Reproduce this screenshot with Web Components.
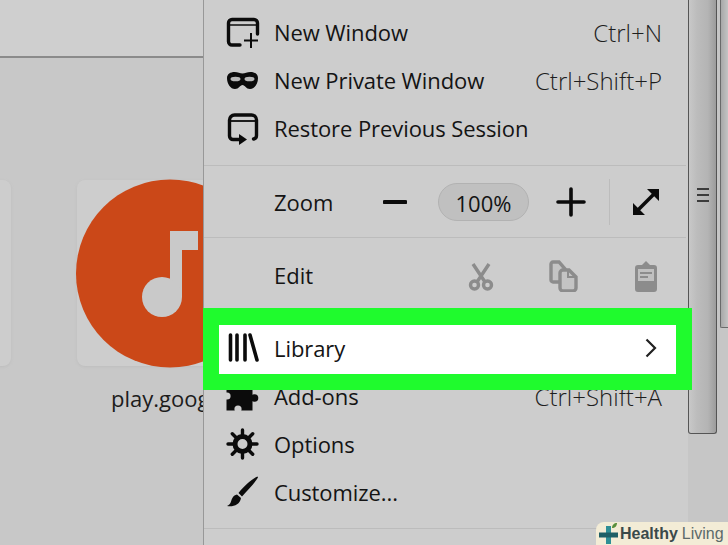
<!DOCTYPE html>
<html>
<head>
<meta charset="utf-8">
<style>
  html, body { margin: 0; height: 100%; overflow: hidden; background: #c8c8c8; }
</style>
</head>
<body>
<browser-shot>
  <new-tab slot="page"></new-tab>
  <app-menu slot="menu">
    <menu-row label="New Window" keys="Ctrl+N" icon="window"></menu-row>
    <menu-row label="New Private Window" keys="Ctrl+Shift+P" icon="mask"></menu-row>
    <menu-row label="Restore Previous Session" icon="restore"></menu-row>
    <menu-sep class="after-group"></menu-sep>
    <zoom-row></zoom-row>
    <menu-sep></menu-sep>
    <edit-row></edit-row>
    <menu-row class="picked" label="Library" icon="library" arrow></menu-row>
    <menu-row label="Add-ons" keys="Ctrl+Shift+A" icon="puzzle"></menu-row>
    <menu-row label="Options" icon="gear"></menu-row>
    <menu-row label="Customize..." icon="brush"></menu-row>
    <menu-sep class="last"></menu-sep>
  </app-menu>
  <menu-scroll slot="scroll"></menu-scroll>
  <brand-badge slot="badge"></brand-badge>
</browser-shot>

<script>
const ICONS = {
  window: `<path d="M14 29H6a3.500 3.500 0 0 1-3.500-3.500V7A3.500 3.500 0 0 1 6 3.500h22A3.500 3.500 0 0 1 31.500 7v11" fill="none" stroke="#0b0b0b" stroke-width="3.400" stroke-linecap="round"/><path d="M3 9h28" stroke="#0b0b0b" stroke-width="1.500"/><path d="M25 17v15M18 24.500h14" stroke="#0b0b0b" stroke-width="2"/>`,
  mask: `<path d="M1 14c0-4 3.500-6 7.500-6 3.500 0 5.500 1.500 8 1.500S21 8 24.500 8c4 0 7.500 2 7.500 6 0 6-3.500 11-8 11-4 0-5-4-7.500-4S13 25 9 25c-4.500 0-8-5-8-11z" fill="#0b0b0b"/><ellipse cx="9.500" cy="15" rx="5" ry="2.300" fill="#b8b8b8"/><ellipse cx="23.500" cy="15" rx="5" ry="2.300" fill="#b8b8b8"/>`,
  restore: `<path d="M3.500 8a5 5 0 0 1 5-5h17a5 5 0 0 1 5 5v15.500a3.500 3.500 0 0 1-3 3.500M3.500 8v16a3.500 3.500 0 0 0 3.500 3.500h7" fill="none" stroke="#0b0b0b" stroke-width="3.400" stroke-linecap="round"/><path d="M4 9h26" stroke="#0b0b0b" stroke-width="1.800"/><path d="M13 22l8 5.500-8 5.500z" fill="#0b0b0b"/>`,
  library: `<path d="M4.500 4v25M11 4v25M19 4v25M24 4l7 25" fill="none" stroke="#0b0b0b" stroke-width="3.600" stroke-linecap="round"/>`,
  puzzle: `<path d="M.5 6h26v24.500H.5z" fill="#0b0b0b"/><circle cx="28.500" cy="18" r="3.800" fill="#0b0b0b"/><circle cx="1" cy="16" r="3.600" fill="#cdcdcd"/><circle cx="12" cy="29" r="3.600" fill="#cdcdcd"/>`,
  gear: `<g stroke="#0b0b0b" stroke-width="3.400" stroke-linecap="round"><path d="M16.500 2v28M2 16h29M6.300 5.800l20.400 20.400M26.700 5.800L6.300 26.200"/></g><circle cx="16.500" cy="16" r="7.500" fill="#cdcdcd" stroke="#0b0b0b" stroke-width="5"/>`,
  brush: `<path d="M31.500.5C26 3 18 10 12.500 17l3.500 3.500C21 15 28 8 32 1.500z" fill="#0b0b0b"/><path d="M11 18.500c-4 1-5 4-6 7-.5 2-2 4-4 4.500 6 1 13-1 14-8z" fill="#0b0b0b"/>`
};

const svgIcon = (name) => `<svg width="34" height="34" viewBox="0 0 34 34">${ICONS[name] || ''}</svg>`;

class BrowserShot extends HTMLElement {
  constructor() {
    super();
    this.attachShadow({ mode: 'open' }).innerHTML = `
      <style>
        :host { display: grid; grid-template-columns: 203px 485px 40px; height: 545px; width: 728px; position: relative; overflow: hidden; font-family: "Open Sans", "Noto Sans", sans-serif; }
        .badge { position: absolute; right: 0; bottom: 0; z-index: 3; }
      </style>
      <slot name="page"></slot>
      <slot name="menu"></slot>
      <slot name="scroll"></slot>
      <div class="badge"><slot name="badge"></slot></div>
    `;
  }
}

class NewTab extends HTMLElement {
  constructor() {
    super();
    this.attachShadow({ mode: 'open' }).innerHTML = `
      <style>
        :host { display: flex; flex-direction: column; overflow: hidden; background: #c8c8c8; height: 545px; }
        .bar { height: 56px; flex: none; background: #cfcfcf; border-bottom: 2px solid #8b8b8b; }
        .tiles { display: flex; gap: 66px; margin: 122px 0 0 -177px; }
        .tile { flex: none; width: 188px; }
        .box { height: 186px; border-radius: 8px; background: #cdcdcd; box-shadow: 0 1px 3px #bdbdbd; position: relative; }
        .name { margin-top: 17px; margin-left: 34px; white-space: nowrap; font-size: 22px; line-height: 30px; color: #1c1c1c; }
        svg { position: absolute; left: -1px; top: -1px; }
      </style>
      <div class="bar"></div>
      <div class="tiles">
        <div class="tile"><div class="box"></div></div>
        <div class="tile">
          <div class="box">
            <svg width="190" height="190" viewBox="0 0 190 190">
              <circle cx="94" cy="94.500" r="94" fill="#cb4818"/>
              <path d="M94 52h28v19h-16v47H94z" fill="#c9c9c9"/>
              <circle cx="86" cy="118" r="20" fill="#c9c9c9"/>
            </svg>
          </div>
          <div class="name">play.goog</div>
        </div>
      </div>
    `;
  }
}

class AppMenu extends HTMLElement {
  constructor() {
    super();
    this.attachShadow({ mode: 'open' }).innerHTML = `
      <style>
        :host { display: block; height: 545px; background: #cdcdcd; border-left: 1px solid #989898; box-sizing: border-box; padding-top: 9px; position: relative; z-index: 1; }
      </style>
      <slot></slot>
    `;
  }
}

class MenuRow extends HTMLElement {
  constructor() {
    super();
    const keys = this.getAttribute('keys');
    const arrow = this.hasAttribute('arrow');
    this.attachShadow({ mode: 'open' }).innerHTML = `
      <style>
        :host { display: flex; align-items: center; box-sizing: border-box; height: 48px; padding: 0 26px 2px 22px; font-size: 22px; letter-spacing: -0.08px; color: #141414; white-space: nowrap; }
        :host(.picked) { position: relative; z-index: 2; height: 49px; margin: 11px 12px -1px 15px; padding: 0 19px 3px 7px; background: #fff; outline: 16px solid #1ffb2d; box-shadow: 0 -1px 0 16px #1ffb2d; }
        .icon { width: 34px; height: 34px; flex: none; margin: 2px 14px 0 0; display: block; }
        :host(.picked) .icon { margin-top: 0; }
        svg { display: block; }
        .label { flex: 1; }
        .keys { font-size: 24px; color: #1e1e1e; font-weight: 300; letter-spacing: 0; }
      </style>
      <span class="icon">${svgIcon(this.getAttribute('icon'))}</span>
      <span class="label">${this.getAttribute('label')}</span>
      ${keys ? `<span class="keys">${keys}</span>` : ''}
      ${arrow ? `<svg width="12" height="20" viewBox="0 0 12 20"><path d="M1.500 1.500l8.500 8.500-8.500 8.500" fill="none" stroke="#222" stroke-width="2.200"/></svg>` : ''}
    `;
  }
}

class MenuSep extends HTMLElement {
  constructor() {
    super();
    this.attachShadow({ mode: 'open' }).innerHTML = `
      <style>
        :host { display: block; height: 1px; background: #bcbcbc; margin-right: 2px; }
        :host(.after-group) { margin-top: 12px; }
        :host(.last) { margin-top: 11px; }
      </style>
    `;
  }
}

class ZoomRow extends HTMLElement {
  constructor() {
    super();
    this.attachShadow({ mode: 'open' }).innerHTML = `
      <style>
        :host { display: flex; align-items: center; height: 71px; padding-left: 70px; font-size: 22px; color: #141414; }
        .label { width: 109px; }
        .pill { width: 91px; height: 38px; margin-left: 31px; border-radius: 19px; background: #c0c0c0; border: 1px solid #b2b2b2; box-sizing: border-box; text-align: center; line-height: 39px; }
        svg { display: block; flex: none; }
        .plus { margin-left: 27px; }
        .rule { width: 1px; height: 46px; background: #bcbcbc; margin-left: 23px; }
        .full { margin-left: 21px; }
      </style>
      <span class="label">Zoom</span>
      <svg width="24" height="6" viewBox="0 0 24 6"><path d="M1.500 3h21" stroke="#0b0b0b" stroke-width="4" stroke-linecap="round"/></svg>
      <span class="pill">100%</span>
      <svg class="plus" width="30" height="30" viewBox="0 0 30 30"><path d="M15 2v26M2 15h26" stroke="#0b0b0b" stroke-width="3.600" stroke-linecap="round"/></svg>
      <span class="rule"></span>
      <svg class="full" width="30" height="30" viewBox="0 0 30 30"><path d="M7 23L23 7" stroke="#0b0b0b" stroke-width="3.600"/><path d="M16 2h12v12zM2 16v12h12z" fill="#0b0b0b"/></svg>
    `;
  }
}

class EditRow extends HTMLElement {
  constructor() {
    super();
    this.attachShadow({ mode: 'open' }).innerHTML = `
      <style>
        :host { display: flex; align-items: center; height: 76px; padding: 0 31px 0 70px; font-size: 22px; color: #141414; box-sizing: border-box; }
        .label { flex: 1; margin-top: -2px; }
        svg { display: block; flex: none; }
        .copy { margin-left: 54px; }
        .paste { margin-left: 57px; }
      </style>
      <span class="label">Edit</span>
      <svg width="26" height="30" viewBox="0 0 26 30">
        <g fill="none" stroke="#8c8c8c" stroke-width="3.400"><circle cx="6.500" cy="24" r="4"/><circle cx="19.500" cy="24" r="4"/><path d="M9 21L21 3M17 21L5 3"/></g>
      </svg>
      <svg class="copy" width="30" height="32" viewBox="0 0 30 32">
        <path d="M3 4a2 2 0 0 1 2-2h6l6 7v13H5a2 2 0 0 1-2-2z" fill="#c4c4c4" stroke="#8c8c8c" stroke-width="3.400"/>
        <path d="M12 13a3 3 0 0 1 3-3h6l7 7v11a3 3 0 0 1-3 3H15a3 3 0 0 1-3-3z" fill="#c4c4c4" stroke="#8c8c8c" stroke-width="3.400"/>
        <path d="M20 10v7h8" fill="none" stroke="#8c8c8c" stroke-width="2"/>
      </svg>
      <svg class="paste" width="22" height="32" viewBox="0 0 22 32">
        <path d="M3 5h4l4-4 4 4h4a3 3 0 0 1 3 3v21a3 3 0 0 1-3 3H3a3 3 0 0 1-3-3V8a3 3 0 0 1 3-3z" fill="#8c8c8c"/>
        <path d="M3 9h16v12H3z" fill="#c0c0c0"/><path d="M5 13h12M5 17h8" stroke="#8c8c8c" stroke-width="2"/>
      </svg>
    `;
  }
}

class MenuScroll extends HTMLElement {
  constructor() {
    super();
    this.attachShadow({ mode: 'open' }).innerHTML = `
      <style>
        :host { display: flex; height: 545px; background: #c6c6c6; }
        .main { width: 29px; height: 434px; box-sizing: border-box; border: 1px solid #555; border-top: 0; border-radius: 0 0 3px 3px; background: linear-gradient(90deg, #c8c8c8, #bcbcbc 30%, #b4b4b4 70%, #9c9c9c); display: flex; align-items: center; justify-content: center; padding-bottom: 43px; }
        .grip { display: block; width: 12px; height: 14px; background: repeating-linear-gradient(#3c3c3c 0 2px, transparent 2px 6px); }
        .side { width: 11px; flex: none; }
        .thumb { height: 328px; margin-left: 3px; box-sizing: border-box; border-left: 1px solid #6a6a6a; border-bottom: 1px solid #6a6a6a; border-radius: 0 0 0 2px; background: linear-gradient(90deg, #a8a8a8, #c4c4c4); }
      </style>
      <div class="main"><span class="grip"></span></div>
      <div class="side"><div class="thumb"></div></div>
    `;
  }
}

class BrandBadge extends HTMLElement {
  constructor() {
    super();
    this.attachShadow({ mode: 'open' }).innerHTML = `
      <style>
        :host { display: flex; align-items: center; height: 23px; width: 132px; box-sizing: border-box; padding-left: 3px; background: #f3ecd6; border-radius: 8px 0 0 0; font-family: "Liberation Sans", sans-serif; font-size: 16px; color: #5c6a6a; white-space: nowrap; }
        b { color: #3a4a4a; margin-left: 1px; }
        svg { flex: none; display: block; }
        span { margin-left: 4px; }
      </style>
      <svg width="20" height="23" viewBox="0 0 20 23">
        <path d="M7 4h5v18H7z" fill="#2f8f96"/><path d="M0 10.500h19v5H0z" fill="#1e5f66"/>
        <path d="M13 6c0-3 2-5 5-5 0 3-2 5-5 5z" fill="#5a8f3c"/>
      </svg>
      <b>Healthy</b><span>Living</span>
    `;
  }
}

customElements.define('browser-shot', BrowserShot);
customElements.define('new-tab', NewTab);
customElements.define('app-menu', AppMenu);
customElements.define('menu-row', MenuRow);
customElements.define('menu-sep', MenuSep);
customElements.define('zoom-row', ZoomRow);
customElements.define('edit-row', EditRow);
customElements.define('menu-scroll', MenuScroll);
customElements.define('brand-badge', BrandBadge);
</script>
</body>
</html>
